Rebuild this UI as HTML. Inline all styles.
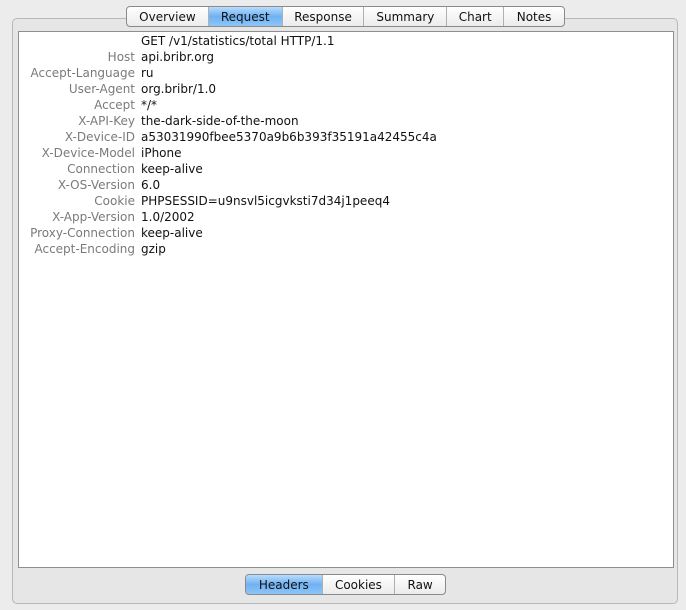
<!DOCTYPE html>
<html><head><style>
body{margin:0;width:686px;height:610px;background:#ececec;position:relative;overflow:hidden;font-family:"DejaVu Sans","Liberation Sans",sans-serif;font-size:12px;}
.panel{position:absolute;left:12px;top:18px;width:664px;height:584px;border:1px solid #b8b8b8;border-radius:5px;background:#e6e6e6;}
.white{position:absolute;left:18px;top:31px;width:654px;height:535px;background:#fff;border:1px solid #8e8e8e;}
.tabs{position:absolute;display:flex;height:19px;border:1px solid #8a8a8a;border-radius:4px;background:linear-gradient(#fff,#ececec);overflow:hidden;}
.tabs div{border-left:1px solid #b0b0b0;text-align:center;line-height:20px;font-size:12px;color:#111;}
.tabs div:first-child{border-left:none}
.tabs .sel{background:linear-gradient(#b9dcfc,#6fb1f2 50%,#8ec6f8);}
.rows{position:absolute;left:18px;top:33px;}
.r{height:16px;line-height:16px;white-space:nowrap;}
.k{display:inline-block;width:117px;text-align:right;color:#7a7a7a;padding-right:6px;}
.v{color:#111}
</style></head><body>
<div class="panel"></div>
<div class="white"></div>
<div class="tabs" style="left:126px;top:6px;width:437px;">
<div style="width:81px">Overview</div><div class="sel" style="width:73px">Request</div><div style="width:81px">Response</div><div style="width:82px">Summary</div><div style="width:56px">Chart</div><div style="width:60px">Notes</div>
</div>
<div class="tabs" style="left:245px;top:574px;width:199px;">
<div class="sel" style="width:76px">Headers</div><div style="width:72px">Cookies</div><div style="width:50px">Raw</div>
</div>
<div class="rows">
<div class="r"><span class="k"></span><span class="v">GET /v1/statistics/total HTTP/1.1</span></div>
<div class="r"><span class="k">Host</span><span class="v">api.bribr.org</span></div>
<div class="r"><span class="k">Accept-Language</span><span class="v">ru</span></div>
<div class="r"><span class="k">User-Agent</span><span class="v">org.bribr/1.0</span></div>
<div class="r"><span class="k">Accept</span><span class="v">*/*</span></div>
<div class="r"><span class="k">X-API-Key</span><span class="v">the-dark-side-of-the-moon</span></div>
<div class="r"><span class="k">X-Device-ID</span><span class="v">a53031990fbee5370a9b6b393f35191a42455c4a</span></div>
<div class="r"><span class="k">X-Device-Model</span><span class="v">iPhone</span></div>
<div class="r"><span class="k">Connection</span><span class="v">keep-alive</span></div>
<div class="r"><span class="k">X-OS-Version</span><span class="v">6.0</span></div>
<div class="r"><span class="k">Cookie</span><span class="v">PHPSESSID=u9nsvl5icgvksti7d34j1peeq4</span></div>
<div class="r"><span class="k">X-App-Version</span><span class="v">1.0/2002</span></div>
<div class="r"><span class="k">Proxy-Connection</span><span class="v">keep-alive</span></div>
<div class="r"><span class="k">Accept-Encoding</span><span class="v">gzip</span></div>
</div>
</body></html>
